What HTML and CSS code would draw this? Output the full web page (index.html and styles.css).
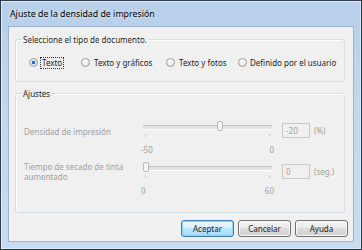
FILE: index.html
```html
<!DOCTYPE html>
<html lang="es">
<head>
<meta charset="utf-8">
<title>Ajuste de la densidad de impresión</title>
<link rel="stylesheet" href="styles.css">
</head>
<body>
<div class="window">
  <div class="titlebar">Ajuste de la densidad de impresión</div>
  <div class="client">
    <fieldset class="group group-doc">
      <legend>Seleccione el tipo de documento.</legend>
      <div class="radios">
        <label class="radio checked"><span class="circle"></span><span class="focus">Texto</span></label>
        <label class="radio"><span class="circle"></span><span class="text">Texto y gráficos</span></label>
        <label class="radio"><span class="circle"></span><span class="text">Texto y fotos</span></label>
        <label class="radio"><span class="circle"></span><span class="text">Definido por el usuario</span></label>
      </div>
    </fieldset>
    <fieldset class="group group-adj">
      <legend>Ajustes</legend>
      <div class="setting">
        <div class="name">Densidad de impresión</div>
        <div class="slider">
          <div class="track"><div class="range"><span class="thumb" style="left: 60%"></span></div></div>
          <div class="ticks"><span></span><span></span></div>
          <div class="scale"><span>-50</span><span>0</span></div>
        </div>
        <div class="value">-20</div>
        <div class="unit">(%)</div>
      </div>
      <div class="setting">
        <div class="name">Tiempo de secado de tinta aumentado</div>
        <div class="slider">
          <div class="track"><div class="range"><span class="thumb" style="left: 0%"></span></div></div>
          <div class="ticks"><span></span><span></span></div>
          <div class="scale"><span>0</span><span>60</span></div>
        </div>
        <div class="value">0</div>
        <div class="unit">(seg.)</div>
      </div>
    </fieldset>
    <div class="buttons">
      <button class="btn default">Aceptar</button>
      <button class="btn">Cancelar</button>
      <button class="btn">Ayuda</button>
    </div>
  </div>
</div>
</body>
</html>
```

FILE: styles.css
```css
* { box-sizing: border-box; }
html, body { margin: 0; padding: 0; }
body {
  width: 362px;
  height: 250px;
  font-family: "Noto Sans", "Open Sans", sans-serif;
  font-size: 8px;
  color: #1e1e1e;
  background: #fff;
}
.window {
  width: 362px;
  height: 250px;
  border: 1px solid #2f3a48;
  background: linear-gradient(180deg, #b7cfe9 0%, #c1d7ee 40%, #c7dcf2 100%);
  box-shadow: inset 1px 1px 0 rgba(255,255,255,0.6), inset -1px -1px 0 rgba(255,255,255,0.4);
  padding: 0 7px 7px 7px;
  display: flex;
  flex-direction: column;
}
.titlebar {
  height: 25px;
  display: flex;
  align-items: center;
  padding-left: 2px;
  padding-top: 1px;
  font-size: 8.8px;
  color: #000;
  text-shadow: 0 0 4px rgba(255,255,255,0.9);
}
.client {
  flex: 1;
  background: #f0f0f0;
  border: 1px solid #9fb4cc;
  padding: 7px 0 0 6px;
  display: flex;
  flex-direction: column;
}
.group {
  margin: 0 8px 0 0;
  border: 1px solid #d5dfe5;
  border-radius: 3px;
  box-shadow: inset 1px 1px 0 #fff;
  padding: 0 8px;
  min-width: 0;
}
.group legend {
  padding: 0 1px;
  margin-left: -2px;
  line-height: 11px;
  color: #1e1e1e;
}
.group-doc { height: 48px; }
.radios {
  display: grid;
  grid-template-columns: 52px 85px 72px auto;
  align-items: center;
  margin-top: 12px;
  padding-left: 5px;
}
.radio {
  display: flex;
  align-items: center;
  white-space: nowrap;
}
.circle {
  width: 9px;
  height: 9px;
  border-radius: 50%;
  border: 1px solid #9a9a9a;
  background: radial-gradient(circle at 40% 35%, #fff 0%, #ececec 60%, #d4d4d4 100%);
  margin-right: 3px;
  flex: none;
}
.radio.checked .circle {
  background: radial-gradient(circle at 50% 50%, #2a62b8 0%, #1f6fd6 28%, #cfe0f2 38%, #f4f4f4 100%);
}
.text { padding-left: 1px; }
.radio:last-child .text { padding-left: 0; }
.focus {
  outline: 1px dotted #333;
  padding: 0 1px;
  line-height: 10px;
}
.group-adj {
  margin-top: 6px;
  height: 125px;
}
.setting {
  display: grid;
  grid-template-columns: 113px 137px 28px auto;
  column-gap: 4px;
  color: #a0a0a0;
}
.setting:first-of-type { margin-top: 22px; }
.setting + .setting { margin-top: 7px; }
.name { line-height: 10px; }
.setting:first-of-type .name { padding-top: 6px; }
.setting + .setting .name { width: 100px; }
.slider { display: flex; flex-direction: column; }
.track {
  position: relative;
  height: 11px;
  margin: 0 6px 0 2px;
}
.track::before {
  content: "";
  position: absolute;
  left: 0; right: 0; top: 4px;
  height: 3px;
  border-top: 1px solid #c4c4c4;
  border-bottom: 1px solid #fff;
  background: #e2e2e2;
}
.range {
  position: absolute;
  left: 0; right: 6px; top: 0; bottom: 0;
}
.thumb {
  position: absolute;
  top: 0;
  width: 6px;
  height: 10px;
  border: 1px solid #b8b8b8;
  border-radius: 2px;
  background: #f6f6f6;
}
.ticks {
  display: flex;
  justify-content: space-between;
  margin: 2px 8px 0 4px;
  height: 3px;
}
.ticks span { width: 1px; height: 3px; background: #c6c6c6; }
.scale {
  display: flex;
  justify-content: space-between;
  margin: 8px 4px 0 0;
  line-height: 10px;
}
.value {
  height: 15px;
  margin-top: 2px;
  border: 1px solid #c8c8c8;
  background: #f0f0f0;
  padding-left: 3px;
  line-height: 13px;
}
.unit { line-height: 10px; margin-top: 5px; }
.buttons {
  display: flex;
  justify-content: flex-end;
  gap: 4px;
  margin-top: 7px;
  margin-right: 5px;
}
.btn {
  font: inherit;
  color: #1e1e1e;
  width: 53px;
  height: 17px;
  padding: 0;
  border: 1px solid #707070;
  border-radius: 3px;
  background: linear-gradient(180deg, #f2f2f2 0%, #ebebeb 49%, #dddddd 50%, #cfcfcf 100%);
  box-shadow: inset 0 0 0 1px rgba(255,255,255,0.8);
}
.btn.default {
  border-color: #3c7fb1;
  box-shadow: inset 0 0 0 1px #8fd0f4;
  background: linear-gradient(180deg, #eaf6fd 0%, #d9f0fc 49%, #bee6fd 50%, #a7d9f5 100%);
}
```
